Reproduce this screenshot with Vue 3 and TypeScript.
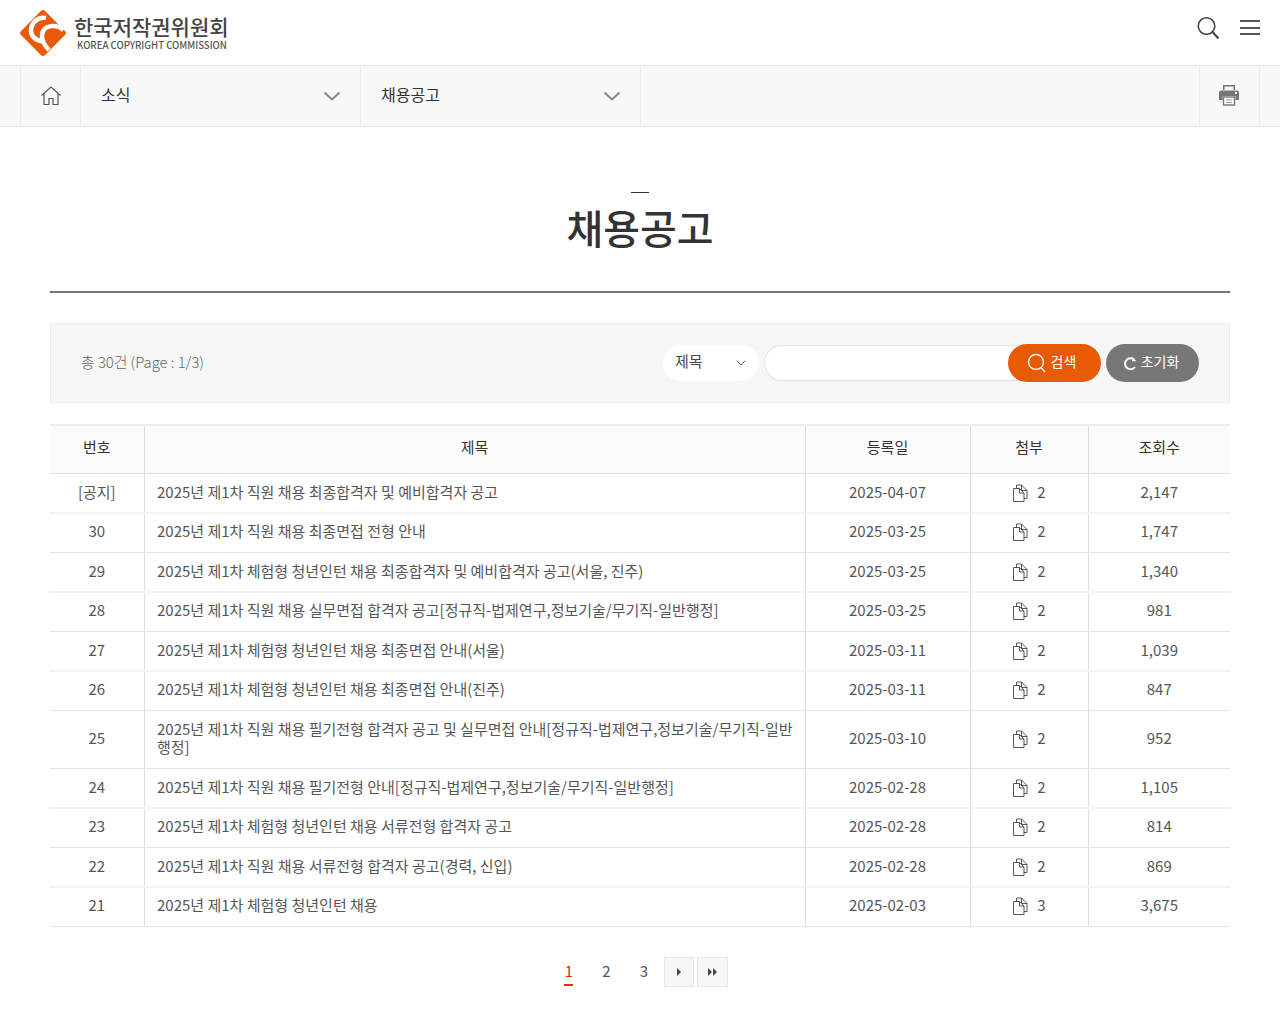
<script setup lang="ts">
interface Row { no: string; title: string; date: string; files: number; views: string }
const rows: Row[] = [
  { no: '[공지]', title: '2025년 제1차 직원 채용 최종합격자 및 예비합격자 공고', date: '2025-04-07', files: 2, views: '2,147' },
  { no: '30', title: '2025년 제1차 직원 채용 최종면접 전형 안내', date: '2025-03-25', files: 2, views: '1,747' },
  { no: '29', title: '2025년 제1차 체험형 청년인턴 채용 최종합격자 및 예비합격자 공고(서울, 진주)', date: '2025-03-25', files: 2, views: '1,340' },
  { no: '28', title: '2025년 제1차 직원 채용 실무면접 합격자 공고[정규직-법제연구,정보기술/무기직-일반행정]', date: '2025-03-25', files: 2, views: '981' },
  { no: '27', title: '2025년 제1차 체험형 청년인턴 채용 최종면접 안내(서울)', date: '2025-03-11', files: 2, views: '1,039' },
  { no: '26', title: '2025년 제1차 체험형 청년인턴 채용 최종면접 안내(진주)', date: '2025-03-11', files: 2, views: '847' },
  { no: '25', title: '2025년 제1차 직원 채용 필기전형 합격자 공고 및 실무면접 안내[정규직-법제연구,정보기술/무기직-일반행정]', date: '2025-03-10', files: 2, views: '952' },
  { no: '24', title: '2025년 제1차 직원 채용 필기전형 안내[정규직-법제연구,정보기술/무기직-일반행정]', date: '2025-02-28', files: 2, views: '1,105' },
  { no: '23', title: '2025년 제1차 체험형 청년인턴 채용 서류전형 합격자 공고', date: '2025-02-28', files: 2, views: '814' },
  { no: '22', title: '2025년 제1차 직원 채용 서류전형 합격자 공고(경력, 신입)', date: '2025-02-28', files: 2, views: '869' },
  { no: '21', title: '2025년 제1차 체험형 청년인턴 채용', date: '2025-02-03', files: 3, views: '3,675' }
]
</script>

<template>
  <div class="page">
    <header class="top">
      <a class="logo">
        <svg class="logo-mark" width="48" height="48" viewBox="0 0 48 48">
          <rect x="7" y="7" width="34" height="34" rx="3" transform="rotate(45 24 24)" fill="#e8590c" />
          <path d="M27 9C18 7 12 15 12 21.500 12 28 18 32.500 25 32" fill="none" stroke="#fff" stroke-width="4.500" />
          <path d="M44.500 21C38 15 24 15 23 26c-.5 6 3 11 7 15" fill="none" stroke="#fff" stroke-width="4.500" />
        </svg>
        <span class="logo-text">
          <span class="logo-ko">한국저작권위원회</span>
          <span class="logo-en">KOREA COPYRIGHT COMMISSION</span>
        </span>
      </a>
      <div class="top-icons">
        <svg width="24" height="24" viewBox="0 0 24 24" fill="none" stroke="#444" stroke-width="1.600">
          <circle cx="10.500" cy="10" r="8.300" />
          <path d="M16.500 16l6 6.500" stroke-width="2" />
        </svg>
        <span class="burger"><i></i><i></i><i></i></span>
      </div>
    </header>

    <nav class="crumbs">
      <div class="crumb home">
        <svg width="22" height="22" viewBox="0 0 22 22" fill="none" stroke="#555" stroke-width="1.200">
          <path d="M1.500 10.500 11 2l9.500 8.500" />
          <path d="M4 9v10.500h5v-6h4v6h5V9" />
        </svg>
      </div>
      <div class="crumb menu">
        <span>소식</span>
        <svg width="18" height="10" viewBox="0 0 18 10" fill="none" stroke="#888" stroke-width="2"><path d="M1.500 1.500 9 8.500l7.500-7" /></svg>
      </div>
      <div class="crumb menu">
        <span>채용공고</span>
        <svg width="18" height="10" viewBox="0 0 18 10" fill="none" stroke="#888" stroke-width="2"><path d="M1.500 1.500 9 8.500l7.500-7" /></svg>
      </div>
      <div class="crumb-fill"></div>
      <div class="crumb print">
        <svg width="22" height="22" viewBox="0 0 22 22">
          <path d="M5 1h12v5h-1.500V2.500h-9V6H5z" fill="#777" />
          <path d="M3 6.500h16a2 2 0 0 1 2 2V16h-3.500v-4h-13v4H1V8.500a2 2 0 0 1 2-2z" fill="#777" />
          <rect x="5.500" y="13" width="11" height="8" fill="#fff" stroke="#777" stroke-width="1.400" />
          <path d="M8 16h6M8 18.500h6" stroke="#999" />
          <rect x="17" y="8" width="2" height="2" fill="#fff" />
        </svg>
      </div>
    </nav>

    <main class="main">
      <div class="title-dash"></div>
      <h1 class="title">채용공고</h1>
      <div class="title-rule"></div>

      <section class="search">
        <p class="total">총 30건 (Page : 1/3)</p>
        <div class="controls">
          <div class="select">
            <span>제목</span>
            <svg width="10" height="6" viewBox="0 0 10 6" fill="none" stroke="#666"><path d="M.8.800 5 5l4.200-4.200" /></svg>
          </div>
          <div class="query">
            <div class="input"></div>
            <button class="btn btn-search" type="button">
              <svg width="20" height="20" viewBox="0 0 20 20" fill="none" stroke="#fff" stroke-width="1.300">
                <circle cx="9" cy="9" r="7.500" /><path d="m14 14.500 4 4.500" />
              </svg>
              <span>검색</span>
            </button>
          </div>
          <button class="btn btn-reset" type="button">
            <svg width="14" height="15" viewBox="0 0 14 15" fill="none" stroke="#fff" stroke-width="2">
              <path d="M11.500 4A5.500 5.500 0 1 0 12 11" />
              <path d="M9 .8v4.500h4.500z" fill="#fff" stroke="none" />
            </svg>
            <span>초기화</span>
          </button>
        </div>
      </section>

      <table class="board">
        <colgroup>
          <col class="c1" /><col class="c2" /><col class="c3" /><col class="c4" /><col class="c5" />
        </colgroup>
        <thead>
          <tr><th>번호</th><th>제목</th><th>등록일</th><th>첨부</th><th>조회수</th></tr>
        </thead>
        <tbody>
          <tr v-for="row in rows" :key="row.no">
            <td>{{ row.no }}</td>
            <td class="subject">{{ row.title }}</td>
            <td>{{ row.date }}</td>
            <td>
              <span class="attach">
                <svg width="15" height="18" viewBox="0 0 15 18" fill="none" stroke="#555" stroke-width="1">
                  <path d="M3.500 4.500V1H8.500l5.500 5.500V14.500H11" />
                  <path d="M.5 4.500H6.500L11 9v8.500H.5z" fill="#fff" />
                  <path d="M8.500 1v5.500H14M6.500 4.500V9H11" />
                </svg>
                <span>{{ row.files }}</span>
              </span>
            </td>
            <td>{{ row.views }}</td>
          </tr>
        </tbody>
      </table>

      <div class="pager">
        <a class="num on">1</a>
        <a class="num">2</a>
        <a class="num">3</a>
        <a class="arrow first"><svg width="6" height="8" viewBox="0 0 6 8"><path d="M1 0l4 4-4 4z" fill="#444" /></svg></a>
        <a class="arrow wide"><svg width="11" height="8" viewBox="0 0 11 8"><path d="M1 0l4 4-4 4zM6 0l4 4-4 4z" fill="#444" /></svg></a>
      </div>
    </main>
  </div>
</template>

<style scoped>
.page {
  width: 1280px;
  height: 1024px;
  overflow: hidden;
  background: #fff;
  color: #555;
  font-family: "Noto Sans CJK KR", "Noto Sans", sans-serif;
  font-size: 15px;
  font-weight: 400;
}
.top {
  height: 65px;
  display: flex;
  align-items: center;
  justify-content: space-between;
  padding: 0 20px 0 19px;
}
.logo { display: flex; align-items: center; gap: 7px; }
.logo-mark { display: block; }
.logo-text { display: flex; flex-direction: column; }
.logo-ko {
  font-size: 21px;
  line-height: 24px;
  font-weight: 500;
  color: #444;
  margin-top: -0.5px;
}
.logo-en {
  font-size: 9.600px;
  line-height: 12px;
  font-weight: 500;
  color: #555;
  margin-left: 3px;
  margin-top: 1px;
  white-space: nowrap;
}
.top-icons { display: flex; align-items: center; gap: 20px; margin-top: -10px; }
.burger { width: 20px; display: flex; flex-direction: column; gap: 4.500px; }
.burger i { display: block; height: 2px; background: #555; }
.crumbs {
  height: 60px;
  display: flex;
  padding: 0 20px;
  border-top: 1px solid #e3e3e3;
  border-bottom: 1px solid #e3e3e3;
  background: #f8f8f8;
}
.crumb {
  display: flex;
  align-items: center;
  box-sizing: border-box;
  border-left: 1px solid #ececec;
  color: #333;
  font-size: 16px;
}
.home { width: 60px; justify-content: center; }
.menu { width: 280px; justify-content: space-between; padding: 0 19px 0 20px; }
.menu span { margin-top: -4px; }
.crumb-fill { flex: 1; border-left: 1px solid #ececec; }
.print { width: 61px; justify-content: center; border-right: 1px solid #ececec; padding-right: 2px; padding-bottom: 2px; }
.main { padding: 0 50px; }
.title-dash { width: 18px; height: 1px; background: #333; margin: 65px auto 0; }
.title {
  margin: 6px 0 0;
  text-align: center;
  font-size: 40px;
  line-height: 56px;
  font-weight: 500;
  color: #333;
}
.title-rule { height: 2px; background: #777; margin-top: 36px; }
.search {
  margin-top: 30px;
  height: 80px;
  box-sizing: border-box;
  display: flex;
  align-items: center;
  justify-content: space-between;
  padding: 0 30px;
  background: #f6f6f6;
  border: 1px solid #ededed;
}
.total { margin: -4px 0 0; font-size: 14.800px; color: #666; font-weight: 300; }
.controls { display: flex; align-items: center; }
.select {
  width: 96px;
  height: 36px;
  box-sizing: border-box;
  padding: 0 13px 0 12px;
  display: flex;
  align-items: center;
  justify-content: space-between;
  background: #fff;
  border-radius: 18px;
  font-size: 15px;
  color: #444;
}
.select span { margin-top: -6px; }
.query { display: flex; align-items: center; margin-left: 5px; }
.input {
  width: 263px;
  height: 36px;
  background: #fff;
  border: 1px solid #e3e3e3;
  box-sizing: border-box;
  border-radius: 18px 0 0 18px;
  border-right: none;
}
.btn {
  height: 38px;
  border: none;
  border-radius: 19px;
  color: #fff;
  font-family: inherit;
  font-size: 14px;
  font-weight: 400;
  display: flex;
  align-items: center;
  justify-content: center;
  padding: 0;
}
.btn span { margin-top: -4px; }
.btn-search { width: 93px; margin-left: -19px; background: #e95a05; gap: 4px; padding-right: 6px; position: relative; }
.btn-reset { width: 93px; margin-left: 5px; background: #777; gap: 4px; padding-right: 3px; }
.board {
  width: 1180px;
  margin-top: 21px;
  border-collapse: collapse;
  table-layout: fixed;
  border-top: 2px solid #eee;
}
.c1 { width: 94px; }
.c2 { width: 661px; }
.c3 { width: 165px; }
.c4 { width: 118px; }
.c5 { width: 142px; }
th {
  height: 48px;
  padding: 0 0 5px;
  box-sizing: border-box;
  font-size: 15px;
  font-weight: 400;
  color: #333;
  background: #fbfbfb;
  border-bottom: 1px solid #dedede;
  border-left: 1px solid #dedede;
}
tbody tr { height: 39px; }
tbody tr:nth-child(1), tbody tr:nth-child(3), tbody tr:nth-child(5),
tbody tr:nth-child(8), tbody tr:nth-child(10) { height: 40px; }
tbody tr:nth-child(7) { height: 58px; }
td {
  padding: 0 0 3px;
  text-align: center;
  color: #555;
  border-bottom: 1px solid #e3e3e3;
  border-left: 1px solid #dedede;
  line-height: 18px;
}
tbody tr:nth-child(1) td, tbody tr:nth-child(3) td, tbody tr:nth-child(5) td,
tbody tr:nth-child(8) td, tbody tr:nth-child(10) td { border-bottom: 2px solid #f2f2f2; padding-bottom: 2px; }
tbody tr:nth-child(7) td { padding-bottom: 2px; }
th:first-child, td:first-child { border-left: none; }
td.subject { text-align: left; padding-left: 12.500px; padding-right: 8px; }
.attach { display: flex; justify-content: center; align-items: center; gap: 9px; padding-left: 1px; }
.attach svg { margin-top: 2px; display: block; }
.pager {
  margin-top: 30px;
  display: flex;
  justify-content: center;
  align-items: center;
  padding-right: 2px;
  font-size: 15px;
  color: #555;
}
.num { width: 37.500px; text-align: center; height: 30px; line-height: 27px; box-sizing: border-box; }
.num.on { color: #e03000; position: relative; }
.num.on::after { content: ""; position: absolute; left: 14px; bottom: 1px; width: 9px; height: 2px; background: #e03000; }
.arrow {
  width: 30px;
  height: 30px;
  box-sizing: border-box;
  display: flex;
  align-items: center;
  justify-content: center;
  background: #f6f6f6;
  border: 1px solid #e6e6e6;
  margin-right: 3px;
}
.arrow.first { margin-left: 1px; }
.arrow.wide { width: 31px; margin-right: 0; }
</style>
